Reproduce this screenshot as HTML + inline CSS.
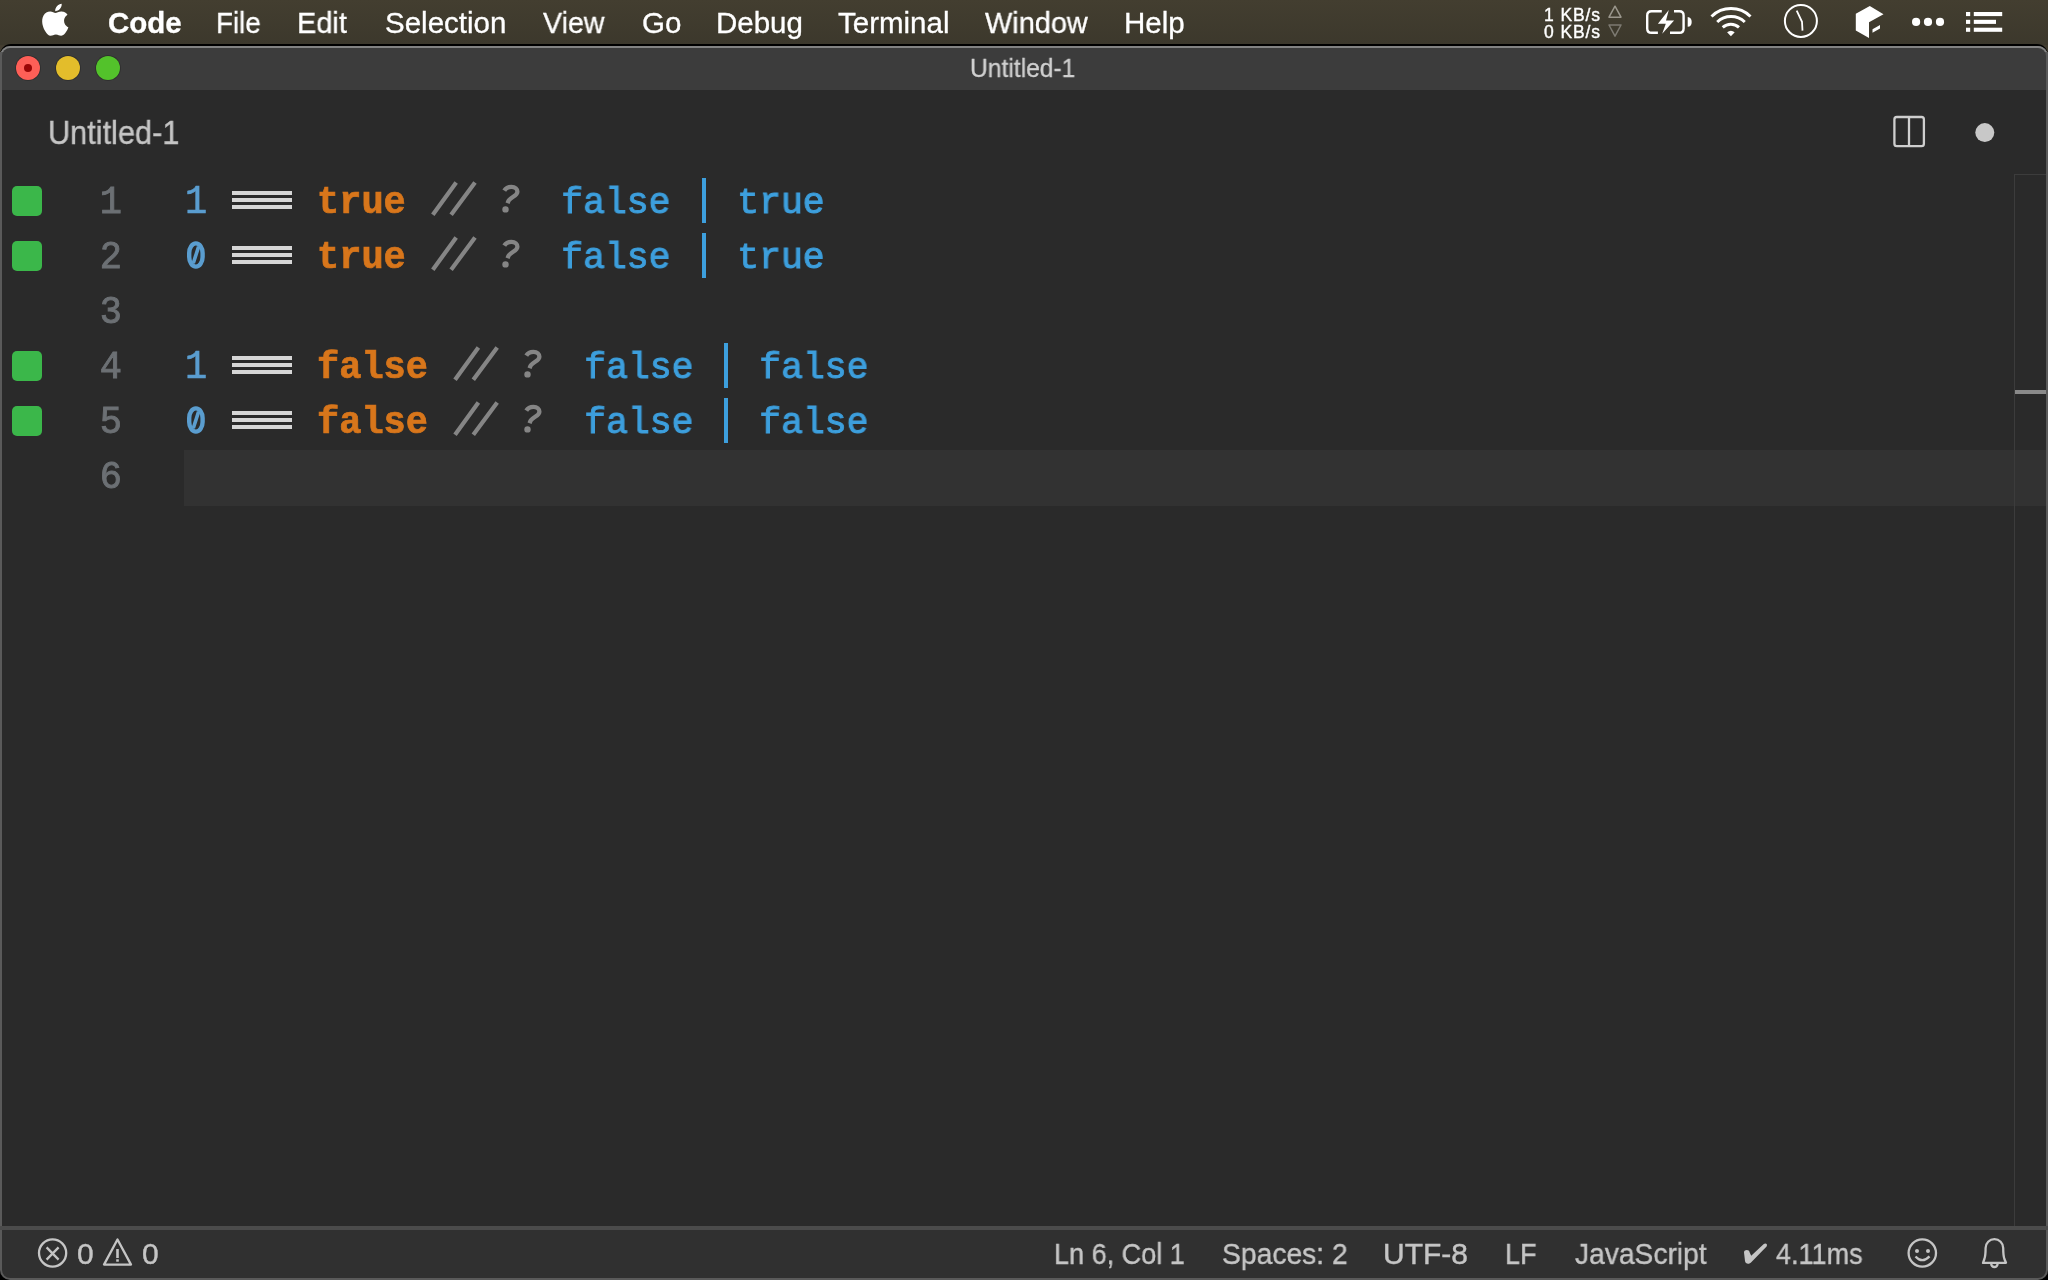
<!DOCTYPE html>
<html><head><meta charset="utf-8">
<style>
*{margin:0;padding:0;box-sizing:border-box}
html,body{width:2048px;height:1280px;overflow:hidden;background:#433d30;font-family:"Liberation Sans",sans-serif}
.abs{position:absolute}
div{will-change:transform}
#menubar{left:0;top:0;width:2048px;height:45px;background:linear-gradient(#433e30,#3c382c)}
.mi{position:absolute;top:1px;height:44px;line-height:44px;color:#fff;font-size:29.5px;white-space:nowrap;-webkit-text-stroke:0.3px #fff}
#win{left:0;top:44px;width:2048px;height:1236px;background:#000;border-radius:11px 11px 10px 10px}
#winb{left:0;top:46px;width:2048px;height:1234px;background:#5a5a5a;border-radius:10px}
#title{left:2px;top:48px;width:2044px;height:42px;background:#3c3c3c;border-radius:8px 8px 0 0}
#editor{left:2px;top:90px;width:2044px;height:1136px;background:#2a2a2a}
#curline{left:184px;top:450px;width:1862px;height:56px;background:#323232}
#mmv{left:2014px;top:174px;width:1px;height:1052px;background:#3c3c3c}
#mmh{left:2014px;top:174px;width:32px;height:1px;background:#3c3c3c}
#mmk{left:2015px;top:390px;width:31px;height:4px;background:#8a8a8a}
#sbborder{left:0;top:1226px;width:2048px;height:4px;background:#4b4b4b}
#status{left:2px;top:1230px;width:2044px;height:48px;background:#303030;border-radius:0 0 8px 8px}
.tl{position:absolute;width:24px;height:24px;border-radius:50%;top:56px;box-shadow:0 0 0 0.8px rgba(30,30,30,0.5)}
.code{position:absolute;font-family:"Liberation Mono",monospace;font-size:37px;white-space:pre;height:55px;line-height:55px;transform:scaleY(1.1);transform-origin:0 37px}
.num{color:#5a9dcf;-webkit-text-stroke:0.6px #5a9dcf}
.kw{color:#d8761b;font-weight:bold;-webkit-text-stroke:0.7px #d8761b;transform:scaleY(1.05)}
.bl{color:#3d9fdd;-webkit-text-stroke:1px #3d9fdd;transform:scale(0.985,1.0);transform-origin:11px 37px}
.q{color:#858585;font-style:italic;-webkit-text-stroke:1.3px #858585}
.bar{position:absolute;left:232px;width:60px;height:4px;background:#d6d6d6}
.pipe{position:absolute;width:4.3px;height:45px;background:#3d9fdd}
.sl{position:absolute}
.ln{position:absolute;left:40px;width:82px;text-align:right;font-family:"Liberation Mono",monospace;font-size:37px;color:#6c7074;height:55px;line-height:55px;-webkit-text-stroke:0.9px #6c7074;transform:scaleY(1.06);transform-origin:0 37px}
.gm{position:absolute;left:12px;width:30px;height:30px;border-radius:5px;background:#3bb74a}
.st{position:absolute;top:1230px;height:48px;line-height:48px;color:#c5c5c5;font-size:30px;white-space:nowrap;transform-origin:0 0;-webkit-text-stroke:0.4px #c5c5c5;will-change:transform}
</style></head><body>
<div id="menubar" class="abs"></div>
<svg class="abs" style="left:0;top:0" width="2048" height="44">
 <path transform="translate(39.2 3.7) scale(1.34)" fill="#fff" d="M12.152 6.896c-.948 0-2.415-1.078-3.96-1.04-2.04.027-3.91 1.183-4.961 3.014-2.117 3.675-.546 9.103 1.519 12.09 1.013 1.454 2.208 3.09 3.792 3.039 1.52-.065 2.09-.987 3.935-.987 1.831 0 2.35.987 3.96.948 1.637-.026 2.676-1.48 3.676-2.948 1.156-1.688 1.636-3.325 1.662-3.415-.039-.013-3.182-1.221-3.22-4.857-.026-3.04 2.48-4.494 2.597-4.559-1.429-2.09-3.623-2.324-4.39-2.376-2-.156-3.675 1.09-4.61 1.09zM15.53 3.83c.843-1.012 1.4-2.427 1.245-3.83-1.207.052-2.662.805-3.532 1.818-.78.896-1.454 2.338-1.273 3.714 1.338.104 2.715-.688 3.559-1.701"/>
 <!-- net triangles -->
 <path d="M1615 6.2L1621 17.2H1609Z" fill="none" stroke="#9a968c" stroke-width="1.5" stroke-linejoin="round"/>
 <path d="M1615 36.2L1621 25H1609Z" fill="none" stroke="#7d7a72" stroke-width="1.5" stroke-linejoin="round"/>
 <!-- battery -->
 <g fill="none" stroke="#fff" stroke-width="2.4">
  <path d="M1661.8 11.3H1651.5Q1647.2 11.3 1647.2 15.6V28.4Q1647.2 32.7 1651.5 32.7H1657.9"/>
  <path d="M1674 11.3H1679.4Q1683.6 11.3 1683.6 15.6V28.4Q1683.6 32.7 1679.4 32.7H1670"/>
 </g>
 <path d="M1687.7 17.1Q1691.7 17.5 1691.7 22Q1691.7 26.5 1687.7 26.8Z" fill="#fff"/>
 <path d="M1668.8 10.1L1657.9 23.7H1665.8L1662.2 33.8L1674.1 20.6H1666Z" fill="#fff"/>
 <!-- wifi -->
 <g fill="none" stroke="#fff" stroke-width="3" stroke-linecap="butt">
  <path d="M1711.5 16.5A28 28 0 0 1 1750.5 16.5"/>
  <path d="M1717.2 22A20 20 0 0 1 1744.8 22"/>
  <path d="M1722.7 27.4A12.2 12.2 0 0 1 1739 27.4"/>
 </g>
 <path d="M1727.1 32.3L1730.9 36.2L1734.7 32.3Q1730.9 29.2 1727.1 32.3Z" fill="#fff"/>
 <!-- clock -->
 <circle cx="1800.9" cy="20.9" r="16" fill="none" stroke="#fff" stroke-width="2"/>
 <path d="M1796.7 10.7L1802 21.8L1802.5 30.6" fill="none" stroke="#fff" stroke-width="1.8"/>
 <!-- cube -->
 <path d="M1869.8 6L1883.5 14.3L1869 22.3V38L1855.8 30.6V13.8Z" fill="#fff"/>
 <path d="M1872.5 29.3L1880 25V28.5L1872.5 32.8Z" fill="#fff"/>
 <!-- dots -->
 <circle cx="1916.1" cy="21.9" r="4.1" fill="#fff"/>
 <circle cx="1928" cy="21.9" r="4.1" fill="#fff"/>
 <circle cx="1940" cy="21.9" r="4.1" fill="#fff"/>
 <!-- list -->
 <g fill="#fff">
  <rect x="1966" y="12" width="4.2" height="4.1"/>
  <rect x="1966" y="19.8" width="4.2" height="4.1"/>
  <rect x="1966" y="27.7" width="4.2" height="4.1"/>
  <rect x="1973.8" y="12" width="28.4" height="4.1"/>
  <rect x="1973.8" y="19.8" width="22.2" height="4.1"/>
  <rect x="1973.8" y="27.7" width="28.4" height="4.1"/>
 </g>
</svg>
<div class="abs" style="left:1541px;top:4.5px;width:60px;height:20px;line-height:20px;text-align:right;color:#fff;font-size:17.5px;letter-spacing:0.9px;-webkit-text-stroke:0.4px #fff">1 KB/s</div>
<div class="abs" style="left:1541px;top:22px;width:60px;height:20px;line-height:20px;text-align:right;color:#fff;font-size:17.5px;letter-spacing:0.9px;-webkit-text-stroke:0.4px #fff">0 KB/s</div>

<div class="mi" style="left:108px;font-weight:bold">Code</div>
<div class="mi" style="left:216px;transform:scaleX(0.94);transform-origin:0 0">File</div>
<div class="mi" style="left:296.5px;transform:scaleX(0.98);transform-origin:0 0">Edit</div>
<div class="mi" style="left:385px">Selection</div>
<div class="mi" style="left:543.3px;transform:scaleX(0.97);transform-origin:0 0">View</div>
<div class="mi" style="left:642px">Go</div>
<div class="mi" style="left:716px">Debug</div>
<div class="mi" style="left:838px">Terminal</div>
<div class="mi" style="left:985px;transform:scaleX(0.98);transform-origin:0 0">Window</div>
<div class="mi" style="left:1124px">Help</div>

<div class="abs" style="left:0;top:1240px;width:2048px;height:40px;background:#000"></div>
<div id="win" class="abs"></div>
<div id="winb" class="abs"></div>
<div class="abs" style="left:0;top:46px;width:2048px;height:12px;border-radius:10px 10px 0 0;background:#838383"></div>
<div class="abs" style="left:0;top:52px;width:2048px;height:20px;background:#5a5a5a"></div>
<div id="title" class="abs"></div>
<div id="editor" class="abs"></div>
<div id="curline" class="abs"></div>
<div id="mmv" class="abs"></div>
<div id="mmh" class="abs"></div>
<div id="mmk" class="abs"></div>
<div id="sbborder" class="abs"></div>
<div id="status" class="abs"></div>

<div class="tl" style="left:16px;background:#fe5f57"></div>
<div class="abs" style="left:24px;top:64px;width:8px;height:8px;border-radius:50%;background:#9a0606"></div>
<div class="tl" style="left:56px;background:#e3bd2b"></div>
<div class="tl" style="left:96px;background:#53c22b"></div>
<div class="abs" style="left:969.5px;top:47px;height:42px;line-height:42px;color:#d0d0d0;font-size:25px;transform:scaleX(0.985);transform-origin:0 0;-webkit-text-stroke:0.3px #d0d0d0">Untitled-1</div>

<div class="abs" style="left:48px;top:110px;height:46px;line-height:46px;color:#c5c5c5;font-size:33px;transform:scaleX(0.93);transform-origin:0 0;-webkit-text-stroke:0.4px #c5c5c5">Untitled-1</div>
<svg class="abs" style="left:0;top:0" width="2048" height="1280">
 <rect x="1894.4" y="117" width="29.5" height="29.2" rx="2.4" fill="none" stroke="#cecece" stroke-width="2.3"/>
 <line x1="1909" y1="117" x2="1909" y2="146" stroke="#d0d0d0" stroke-width="2.3"/>
 <circle cx="1984.8" cy="132.6" r="9.5" fill="#c8c8c8"/>
</svg>
<div class="gm" style="top:186px"></div>
<div class="ln" style="top:176px">1</div>
<div class="code num" style="top:176px;left:185.0px">1</div>
<div class="bar" style="top:191px"></div>
<div class="bar" style="top:198px"></div>
<div class="bar" style="top:205px"></div>
<div class="code kw" style="top:176px;left:317.2px">true</div>
<svg class="sl" style="left:0;top:0px" width="600" height="260"><path d="M432.8 214.8L456.2 182.5M451.1 214.8L475.0 182.5" stroke="#858585" stroke-width="4.2"/></svg>
<svg class="sl" style="left:0.0px;top:0px" width="560" height="230"><path d="M504.3 190.6C506 187.6 508.8 186.9 511.4 186.9C515.3 186.9 517.4 189.1 517.4 191.7C517.4 195.8 511.6 196.6 508.9 200.3C508 201.6 507.8 202.6 507.6 203.2" fill="none" stroke="#858585" stroke-width="4.3"/><circle cx="505.5" cy="209.4" r="3.2" fill="#858585"/></svg>
<div class="code bl" style="top:176px;left:561.4px">false</div>
<div class="pipe" style="top:178px;left:702.2px"></div>
<div class="code bl" style="top:176px;left:737.2px">true</div>
<div class="gm" style="top:241px"></div>
<div class="ln" style="top:231px">2</div>
<svg class="sl" style="left:180px;top:235px" width="40" height="40"><rect x="9.2" y="8.4" width="13.4" height="23.2" rx="6.7" ry="9.5" fill="none" stroke="#5a9dcf" stroke-width="4.4"/><path d="M13.3 28.2L18.6 11.6" stroke="#5a9dcf" stroke-width="3.6"/></svg>
<div class="bar" style="top:246px"></div>
<div class="bar" style="top:253px"></div>
<div class="bar" style="top:260px"></div>
<div class="code kw" style="top:231px;left:317.2px">true</div>
<svg class="sl" style="left:0;top:55px" width="600" height="260"><path d="M432.8 214.8L456.2 182.5M451.1 214.8L475.0 182.5" stroke="#858585" stroke-width="4.2"/></svg>
<svg class="sl" style="left:0.0px;top:55px" width="560" height="230"><path d="M504.3 190.6C506 187.6 508.8 186.9 511.4 186.9C515.3 186.9 517.4 189.1 517.4 191.7C517.4 195.8 511.6 196.6 508.9 200.3C508 201.6 507.8 202.6 507.6 203.2" fill="none" stroke="#858585" stroke-width="4.3"/><circle cx="505.5" cy="209.4" r="3.2" fill="#858585"/></svg>
<div class="code bl" style="top:231px;left:561.4px">false</div>
<div class="pipe" style="top:233px;left:702.2px"></div>
<div class="code bl" style="top:231px;left:737.2px">true</div>
<div class="gm" style="top:351px"></div>
<div class="ln" style="top:341px">4</div>
<div class="code num" style="top:341px;left:185.0px">1</div>
<div class="bar" style="top:356px"></div>
<div class="bar" style="top:363px"></div>
<div class="bar" style="top:370px"></div>
<div class="code kw" style="top:341px;left:317.2px">false</div>
<svg class="sl" style="left:0;top:165px" width="600" height="260"><path d="M455.0 214.8L478.4 182.5M473.3 214.8L497.2 182.5" stroke="#858585" stroke-width="4.2"/></svg>
<svg class="sl" style="left:22.2px;top:165px" width="560" height="230"><path d="M504.3 190.6C506 187.6 508.8 186.9 511.4 186.9C515.3 186.9 517.4 189.1 517.4 191.7C517.4 195.8 511.6 196.6 508.9 200.3C508 201.6 507.8 202.6 507.6 203.2" fill="none" stroke="#858585" stroke-width="4.3"/><circle cx="505.5" cy="209.4" r="3.2" fill="#858585"/></svg>
<div class="code bl" style="top:341px;left:583.6px">false</div>
<div class="pipe" style="top:343px;left:724.4px"></div>
<div class="code bl" style="top:341px;left:759.4px">false</div>
<div class="gm" style="top:406px"></div>
<div class="ln" style="top:396px">5</div>
<svg class="sl" style="left:180px;top:400px" width="40" height="40"><rect x="9.2" y="8.4" width="13.4" height="23.2" rx="6.7" ry="9.5" fill="none" stroke="#5a9dcf" stroke-width="4.4"/><path d="M13.3 28.2L18.6 11.6" stroke="#5a9dcf" stroke-width="3.6"/></svg>
<div class="bar" style="top:411px"></div>
<div class="bar" style="top:418px"></div>
<div class="bar" style="top:425px"></div>
<div class="code kw" style="top:396px;left:317.2px">false</div>
<svg class="sl" style="left:0;top:220px" width="600" height="260"><path d="M455.0 214.8L478.4 182.5M473.3 214.8L497.2 182.5" stroke="#858585" stroke-width="4.2"/></svg>
<svg class="sl" style="left:22.2px;top:220px" width="560" height="230"><path d="M504.3 190.6C506 187.6 508.8 186.9 511.4 186.9C515.3 186.9 517.4 189.1 517.4 191.7C517.4 195.8 511.6 196.6 508.9 200.3C508 201.6 507.8 202.6 507.6 203.2" fill="none" stroke="#858585" stroke-width="4.3"/><circle cx="505.5" cy="209.4" r="3.2" fill="#858585"/></svg>
<div class="code bl" style="top:396px;left:583.6px">false</div>
<div class="pipe" style="top:398px;left:724.4px"></div>
<div class="code bl" style="top:396px;left:759.4px">false</div>
<div class="ln" style="top:286px">3</div>
<div class="ln" style="top:451px">6</div><div class="st" style="left:77px">0</div>
<div class="st" style="left:142px">0</div>
<div class="st" style="left:1053.7px;transform:scaleX(0.901)">Ln 6, Col 1</div>
<div class="st" style="left:1221.6px;transform:scaleX(0.942)">Spaces: 2</div>
<div class="st" style="left:1382.8px">UTF-8</div>
<div class="st" style="left:1505px;transform:scaleX(0.9)">LF</div>
<div class="st" style="left:1574.7px;transform:scaleX(0.94)">JavaScript</div>
<div class="st" style="left:1775.5px;transform:scaleX(0.90)">4.11ms</div>
<svg class="abs" style="left:0;top:0" width="2048" height="1280">
 <g fill="none" stroke="#c5c5c5" stroke-width="2.3">
  <circle cx="52.6" cy="1253" r="13.6"/>
  <path d="M46.6 1247.4L58.6 1259.6M58.6 1247.4L46.6 1259.6"/>
  <path d="M117.5 1239.5L131 1264.6H104Z" stroke-linejoin="round"/>
  <circle cx="1922.3" cy="1253" r="13.7"/>
  <path d="M1915.5 1256.4Q1922.3 1264 1929.5 1256.4"/>
  <path d="M1983 1262.8H2006L2004.4 1259C2003.4 1256 2003.2 1252 2003.2 1248A8.8 8.8 0 0 0 1985.6 1248C1985.6 1252 1985.4 1256 1984.4 1259Z" stroke-linejoin="round"/>
  <path d="M1991.2 1263.8A3.2 3.2 0 0 0 1997.6 1263.8"/>
 </g>
 <rect x="116.2" y="1249" width="2.6" height="9" fill="#c5c5c5"/>
 <rect x="116.2" y="1259.3" width="2.6" height="2.4" fill="#c5c5c5"/>
 <path d="M1744 1252.5C1744 1249.5 1749.3 1249.2 1749.6 1252.3L1751.2 1255.8L1763.5 1244.2C1765.5 1242.5 1768 1244 1766.6 1246.5L1751.5 1262C1749.5 1264.5 1745.5 1264.5 1745 1261Z" fill="#c5c5c5"/>
 <circle cx="1917" cy="1250.9" r="2" fill="#c5c5c5"/>
 <circle cx="1928" cy="1250.9" r="2" fill="#c5c5c5"/>
</svg>
</body></html>
